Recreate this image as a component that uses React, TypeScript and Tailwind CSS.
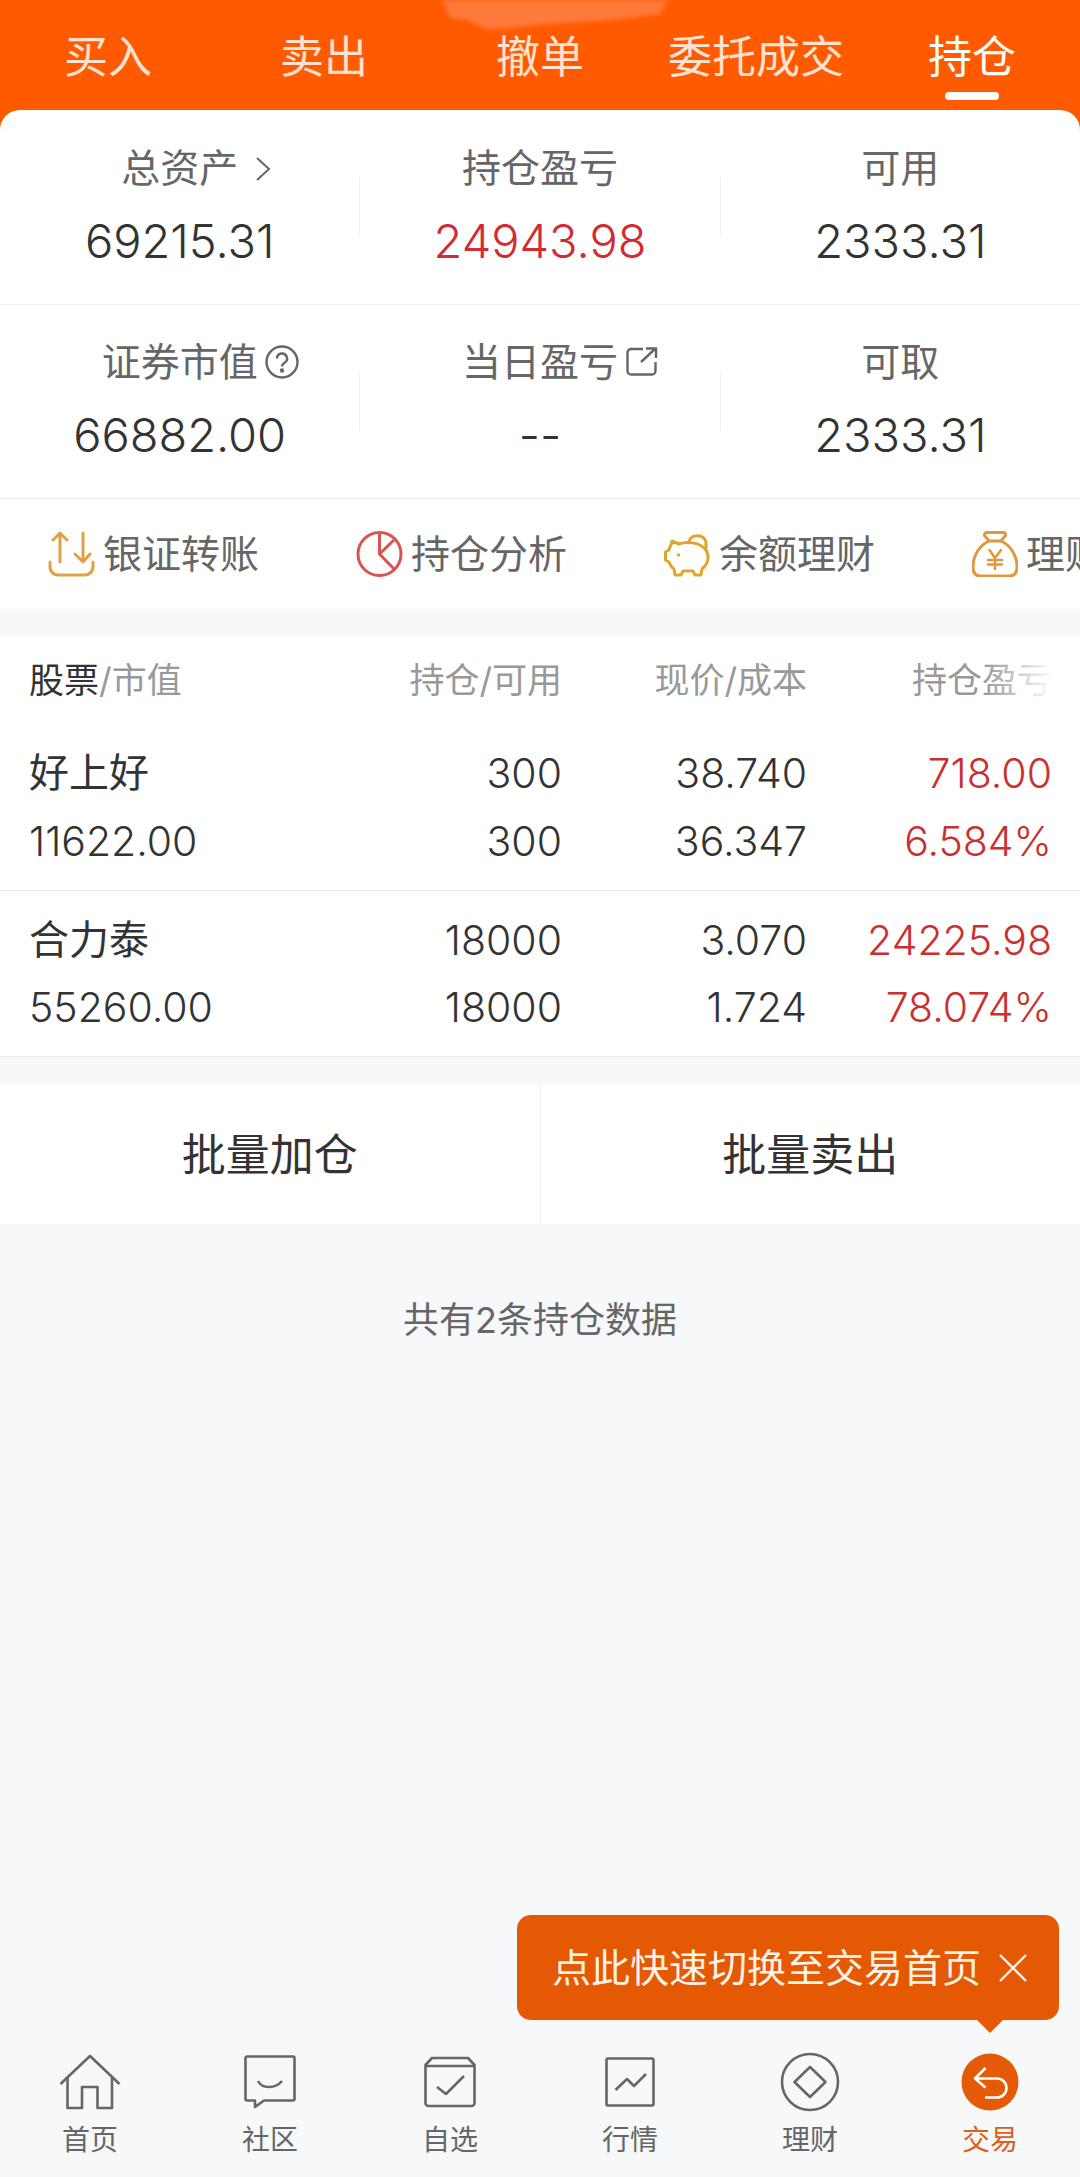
import React from "react";

const Tab = ({ label, active }: { label: string; active?: boolean }) => (
  <div className="flex flex-col items-center pt-[27px]">
    <div className={`text-[44px] leading-[60px] ${active ? "text-white" : "text-[#ffe2cf]"}`}>{label}</div>
    {active && <div className="mt-[5px] h-[8px] w-[54px] rounded-full bg-white" />}
  </div>
);

const Chevron = () => (
  <svg width="16" height="26" viewBox="0 0 16 26" fill="none" stroke="#666" strokeWidth="2" className="absolute left-full top-[13px] ml-[17px]">
    <path d="M2 2 L14 13 L2 24" />
  </svg>
);
const Help = () => (
  <svg width="34" height="34" viewBox="0 0 34 34" fill="none" stroke="#666" strokeWidth="2.4" className="absolute left-full top-[8px] ml-[7px]">
    <circle cx="17" cy="17" r="15.5" />
    <path d="M12 13.5 a5 5 0 1 1 7.5 4.3 c-1.6 1 -2.5 1.9 -2.5 3.7" />
    <circle cx="17" cy="25.5" r="1" fill="#666" />
  </svg>
);
const Share = () => (
  <svg width="32" height="30" viewBox="0 0 32 30" fill="none" stroke="#666" strokeWidth="2.4" className="absolute left-full top-[10px] ml-[8px]">
    <path d="M17 2 H5 a3.5 3.5 0 0 0 -3.5 3.5 V24 a3.5 3.5 0 0 0 3.5 3.5 H26 a3.5 3.5 0 0 0 3.5 -3.5 V15" />
    <path d="M15 15 L29 2 M20 1.5 H30 V11" />
  </svg>
);

const Stat = ({ label, value, red, icon }: { label: string; value: string; red?: boolean; icon?: React.ReactNode }) => (
  <div className="flex flex-1 flex-col items-center">
    <div className="relative text-[39px] leading-[50px] text-[#666]">
      {label}
      {icon}
    </div>
    <div className={`mt-[20px] text-[47px] font-light leading-[56px] ${red ? "text-[#d32a33]" : "text-[#333]"}`}>{value}</div>
  </div>
);

const TransferIcon = () => (
  <svg width="47" height="46" viewBox="0 0 47 46" fill="none" stroke="#e2a046" strokeWidth="3" strokeLinecap="round" strokeLinejoin="round" className="shrink-0">
    <path d="M12 31 V2 M5 9 L12 2 L19 9" />
    <path d="M35 2 V31 M27 23 L35 31 L42 23" />
    <path d="M2 31 V36 a8 8 0 0 0 8 8 H37 a8 8 0 0 0 8 -8 V31" />
  </svg>
);
const PieIcon = () => (
  <svg width="47" height="46" viewBox="0 0 47 46" fill="none" stroke="#d9534f" strokeWidth="3" strokeLinejoin="round" className="shrink-0">
    <circle cx="23.5" cy="23" r="21.5" />
    <path d="M23.5 2 V23 L38 38 M23.5 23 L38 9" />
  </svg>
);
const PigIcon = () => (
  <svg width="47" height="46" viewBox="0 0 47 46" fill="none" stroke="#e0a52c" strokeWidth="3" strokeLinejoin="round" strokeLinecap="round" className="shrink-0">
    <path d="M25 10 a9 8.5 0 0 1 17 1 v6" />
    <path d="M8 10 L15 13 C22 10 36 11 42 19 C46 26 44 33 38 38 L37 44 H31 L29 40 H19 L17 44 H11 L10 38 C7 36 6 33 5 31 L1.5 29 V21 L5 19 C5 16 8 14 8 10 Z" />
    <circle cx="14.5" cy="24" r="1" fill="#d99a30" strokeWidth="1.5" />
  </svg>
);
const BagIcon = () => (
  <svg width="46" height="46" viewBox="0 0 46 46" fill="none" stroke="#e0983c" strokeWidth="3" strokeLinejoin="round" strokeLinecap="round" className="shrink-0">
    <path d="M17 10 L12.5 4.5 Q12 1.5 15 1.5 H31 Q34 1.5 33.5 4.5 L29 10" />
    <path d="M17 10 H29 C38 14 45 24 45 36 C45 42 42 45 37 45 H9 C4 45 1 42 1 36 C1 24 8 14 17 10 Z" />
    <path d="M17.5 19 L23 27 L29 19 M16 29 H30 M16 33.5 H30 M23 27 V38" strokeWidth="2.5" />
  </svg>
);

const Action = ({ icon, label }: { icon: React.ReactNode; label: string }) => (
  <div className="flex shrink-0 items-center gap-[8px]">
    {icon}
    <span className="whitespace-nowrap text-[39px] leading-[50px] text-[#666]">{label}</span>
  </div>
);

const Row = ({ cells, gap, border }: { cells: string[][]; gap: string; border: boolean }) => (
  <div className={`grid grid-cols-[290px_243px_245px_245px] px-[29px] pt-[19px] pb-[19px] ${gap} ${border ? "border-b border-[#ececec]" : ""} text-[41px] font-light leading-[60px] text-[#333]`}>
    {cells[0].map((c, i) => (
      <div key={i} className={i === 0 ? "text-[40px] font-normal" : i === 3 ? "text-right text-[#c9302f]" : "text-right"}>{c}</div>
    ))}
    {cells[1].map((c, i) => (
      <div key={i} className={i === 0 ? "" : i === 3 ? "text-right text-[#c9302f]" : "text-right"}>{c}</div>
    ))}
  </div>
);

const NavItem = ({ icon, label, active }: { icon: React.ReactNode; label: string; active?: boolean }) => (
  <div className="flex flex-col items-center">
    <div className="flex h-[64px] w-[64px] items-center justify-center">{icon}</div>
    <div className={`mt-[6px] text-[28px] leading-[40px] ${active ? "text-[#dc5f1c]" : "text-[#666]"}`}>{label}</div>
  </div>
);

const s = { fill: "none", stroke: "#666", strokeWidth: 2.6 };

const HomeIcon = () => (
  <svg width="62" height="56" viewBox="0 0 62 56" {...s} strokeLinejoin="round">
    <path d="M1.5 30 L31 2 L60.5 30" />
    <path d="M8.5 23.5 V54 H23 V33 H38.5 V54 H53 V23.5" />
  </svg>
);
const ChatIcon = () => (
  <svg width="52" height="54" viewBox="0 0 52 54" {...s} strokeLinejoin="round">
    <path d="M3 1.5 H49 a1.5 1.5 0 0 1 1.5 1.5 V44 a1.5 1.5 0 0 1 -1.5 1.5 H20 L11 52 V45.5 H3 a1.5 1.5 0 0 1 -1.5 -1.5 V3 a1.5 1.5 0 0 1 1.5 -1.5 Z" />
    <path d="M14 26 C18 34 31 34 38 26" />
  </svg>
);
const BoxIcon = () => (
  <svg width="52" height="52" viewBox="0 0 52 52" {...s} strokeLinejoin="round">
    <path d="M8 2 H44 L50.5 9 V47 a3 3 0 0 1 -3 3 H4.5 a3 3 0 0 1 -3 -3 V9 Z" />
    <path d="M1.5 10 H50.5" />
    <path d="M13 31 L22 38 L40 20" />
  </svg>
);
const ChartIcon = () => (
  <svg width="50" height="50" viewBox="0 0 50 50" {...s} strokeLinejoin="round">
    <rect x="1.5" y="1.5" width="47" height="47" rx="1.5" />
    <path d="M10.5 33 L22 22 L29 29 L41 17" />
  </svg>
);
const DiamondIcon = () => (
  <svg width="60" height="60" viewBox="0 0 60 60" {...s} strokeLinejoin="round">
    <circle cx="30" cy="30" r="28" />
    <path d="M30 15 L45.5 30 L30 45 L14.5 30 Z" />
  </svg>
);
const TradeIcon = () => (
  <svg width="58" height="58" viewBox="0 0 58 58">
    <circle cx="29" cy="29" r="28.5" fill="#e55a06" />
    <path d="M14 25.5 H36 a9.5 9.5 0 0 1 0 19 H24 M24.5 15 L14 25.5 L24.5 34.5" fill="none" stroke="#fff" strokeWidth="2.6" strokeLinejoin="round" />
  </svg>
);

export default function App() {
  return (
    <div className="relative flex h-[2177px] w-[1080px] flex-col overflow-hidden bg-[#f7f8fa] font-['Inter','Noto_Sans_CJK_SC',sans-serif]">
      <div className="relative bg-[#ff5a00]">
        <svg width="240" height="32" viewBox="0 0 240 32" className="absolute left-[438px] top-0 blur-[2px]">
          <path d="M2 -4 L12 18 L30 20 L50 30 L110 24 L175 20 L222 14 L232 -4 Z" fill="#ff7a3a" />
        </svg>
        <div className="grid h-[110px] grid-cols-5">
          <Tab label="买入" />
          <Tab label="卖出" />
          <Tab label="撤单" />
          <Tab label="委托成交" />
          <Tab label="持仓" active />
        </div>
        <div className="h-[20px] rounded-t-[20px] bg-white" />
      </div>

      <div className="flex h-[175px] border-b border-[#eeeeee] bg-white pt-[13px]">
        <Stat label="总资产" value="69215.31" icon={<Chevron />} />
        <div className="mt-[34px] h-[60px] w-px bg-[#f0f0f0]" />
        <Stat label="持仓盈亏" value="24943.98" red />
        <div className="mt-[34px] h-[60px] w-px bg-[#f0f0f0]" />
        <Stat label="可用" value="2333.31" />
      </div>

      <div className="flex h-[194px] border-b border-[#eeeeee] bg-white pt-[32px]">
        <Stat label="证券市值" value="66882.00" icon={<Help />} />
        <div className="mt-[34px] h-[60px] w-px bg-[#f0f0f0]" />
        <Stat label="当日盈亏" value="--" icon={<Share />} />
        <div className="mt-[34px] h-[60px] w-px bg-[#f0f0f0]" />
        <Stat label="可取" value="2333.31" />
      </div>

      <div className="flex h-[110px] items-center gap-[97px] overflow-hidden bg-white pl-[48px]">
        <Action icon={<TransferIcon />} label="银证转账" />
        <Action icon={<PieIcon />} label="持仓分析" />
        <Action icon={<PigIcon />} label="余额理财" />
        <Action icon={<BagIcon />} label="理财产品" />
      </div>

      <div className="mt-[28px] border-b border-[#ececec] bg-white">
        <div className="relative grid h-[87px] grid-cols-[290px_243px_245px_245px] px-[29px] pt-[18px] text-[35px] leading-[50px] text-[#999]">
          <div><span className="text-[#333]">股票</span>/市值</div>
          <div className="text-right">持仓/可用</div>
          <div className="text-right">现价/成本</div>
          <div className="text-right">持仓盈亏</div>
          <div className="absolute right-[26px] top-[18px] h-[50px] w-[70px] bg-linear-to-l from-white to-transparent" />
        </div>
        <Row gap="gap-y-[8px]" border cells={[["好上好", "300", "38.740", "718.00"], ["11622.00", "300", "36.347", "6.584%"]]} />
        <Row gap="gap-y-[7px]" border={false} cells={[["合力泰", "18000", "3.070", "24225.98"], ["55260.00", "18000", "1.724", "78.074%"]]} />
      </div>

      <div className="mt-[28px] flex h-[139px] bg-white text-[44px] text-[#333]">
        <div className="flex flex-1 items-center justify-center border-r border-[#eeeeee]">批量加仓</div>
        <div className="flex flex-1 items-center justify-center">批量卖出</div>
      </div>

      <div className="mt-[71px] text-center text-[36px] leading-[50px] text-[#666]">共有2条持仓数据</div>

      <div className="mt-auto grid h-[137px] grid-cols-6 pt-[10px]">
        <NavItem icon={<HomeIcon />} label="首页" />
        <NavItem icon={<ChatIcon />} label="社区" />
        <NavItem icon={<BoxIcon />} label="自选" />
        <NavItem icon={<ChartIcon />} label="行情" />
        <NavItem icon={<DiamondIcon />} label="理财" />
        <NavItem icon={<TradeIcon />} label="交易" active />
      </div>

      <div className="absolute left-[517px] top-[1915px] flex h-[105px] w-[542px] items-center rounded-[14px] bg-[#e55804] pl-[35px] text-[39px] leading-[50px] text-[#fff3e6]">
        <span className="whitespace-nowrap">点此快速切换至交易首页</span>
        <svg width="30" height="30" viewBox="0 0 30 30" fill="none" stroke="#fff3e6" strokeWidth="2.4" className="ml-[17px]">
          <path d="M2 2 L28 28 M28 2 L2 28" />
        </svg>
        <div className="absolute left-[460px] top-full h-0 w-0 border-x-[13px] border-t-[13px] border-x-transparent border-t-[#e55804]" />
      </div>
    </div>
  );
}
